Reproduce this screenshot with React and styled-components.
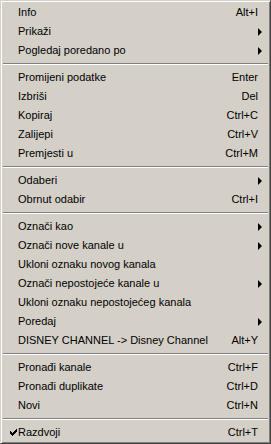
import React from 'react';
import styled, { createGlobalStyle } from 'styled-components';

const Global = createGlobalStyle`
  html, body {
    margin: 0;
    padding: 0;
    background: #d4d0c8;
  }
  body {
    font-family: "Liberation Sans", Arial, sans-serif;
    font-size: 11px;
    color: #000;
  }
`;

const Menu = styled.div`
  width: 271px;
  height: 444px;
  box-sizing: border-box;
  background: #d4d0c8;
  border: 1px solid;
  border-color: #d4d0c8 #404040 #404040 #d4d0c8;
  box-shadow: inset 1px 1px #fff, inset -1px -1px #808080;
  padding: 2px 1px 1px 1px;
  display: flex;
  flex-direction: column;
`;

const Row = styled.div`
  height: 19px;
  display: grid;
  grid-template-columns: 16px 1fr auto;
  align-items: center;
  padding-right: 11px;
  white-space: nowrap;
`;

const CheckCell = styled.span`
  display: flex;
  align-items: center;
  justify-content: flex-end;
  padding-right: 1px;
`;

const Label = styled.span`
  line-height: 19px;
`;

const Shortcut = styled.span`
  line-height: 19px;
  text-align: right;
`;

const Arrow = styled.span`
  width: 0;
  height: 0;
  border-top: 4px solid transparent;
  border-bottom: 4px solid transparent;
  border-left: 4px solid #000;
  margin-right: -4px;
  justify-self: end;
`;

const Separator = styled.div`
  height: 8px;
  display: flex;
  align-items: center;
  padding: 0 1px;
  &::before {
    content: "";
    flex: 1;
    height: 0;
    border-top: 1px solid #808080;
    border-bottom: 1px solid #fff;
  }
`;

// classic 7x7 menu check mark, pixel by pixel
const checkPixels = [
  '......x',
  '.....xx',
  'x...xxx',
  'xx.xxx.',
  'xxxxx..',
  '.xxx...',
  '..x....',
];

const Check = () => (
  <svg width="7" height="7" viewBox="0 0 7 7" shapeRendering="crispEdges">
    {checkPixels.flatMap((line, y) =>
      line.split('').map((c, x) =>
        c === 'x' ? <rect key={`${x}-${y}`} x={x} y={y} width="1" height="1" fill="#000" /> : null
      )
    )}
  </svg>
);

const groups = [
  [
    { label: 'Info', key: 'Alt+I' },
    { label: 'Prikaži', sub: true },
    { label: 'Pogledaj poredano po', sub: true },
  ],
  [
    { label: 'Promijeni podatke', key: 'Enter' },
    { label: 'Izbriši', key: 'Del' },
    { label: 'Kopiraj', key: 'Ctrl+C' },
    { label: 'Zalijepi', key: 'Ctrl+V' },
    { label: 'Premjesti u', key: 'Ctrl+M' },
  ],
  [
    { label: 'Odaberi', sub: true },
    { label: 'Obrnut odabir', key: 'Ctrl+I' },
  ],
  [
    { label: 'Označi kao', sub: true },
    { label: 'Označi nove kanale u', sub: true },
    { label: 'Ukloni oznaku novog kanala' },
    { label: 'Označi nepostojeće kanale u', sub: true },
    { label: 'Ukloni oznaku nepostojećeg kanala' },
    { label: 'Poredaj', sub: true },
    { label: 'DISNEY CHANNEL -> Disney Channel', key: 'Alt+Y' },
  ],
  [
    { label: 'Pronađi kanale', key: 'Ctrl+F' },
    { label: 'Pronađi duplikate', key: 'Ctrl+D' },
    { label: 'Novi', key: 'Ctrl+N' },
  ],
  [{ label: 'Razdvoji', key: 'Ctrl+T', checked: true }],
];

function MenuItem({ label, shortcut, sub, checked }) {
  return (
    <Row>
      <CheckCell>{checked && <Check />}</CheckCell>
      <Label>{label}</Label>
      {sub ? <Arrow /> : <Shortcut>{shortcut}</Shortcut>}
    </Row>
  );
}

export default function App() {
  return (
    <>
      <Global />
      <Menu>
        {groups.map((items, gi) => (
          <React.Fragment key={gi}>
            {gi > 0 && <Separator />}
            {items.map((it) => (
              <MenuItem
                key={it.label}
                label={it.label}
                shortcut={it.key}
                sub={it.sub}
                checked={it.checked}
              />
            ))}
          </React.Fragment>
        ))}
      </Menu>
    </>
  );
}
